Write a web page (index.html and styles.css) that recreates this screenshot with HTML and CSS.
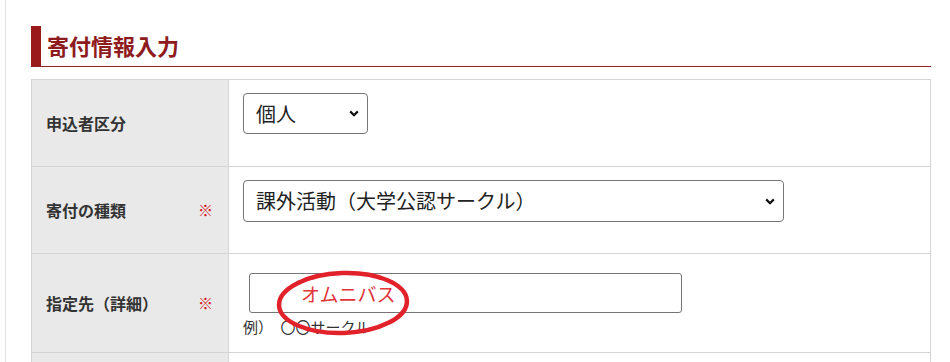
FILE: index.html
```html
<!DOCTYPE html>
<html lang="ja">
<head>
  <meta charset="UTF-8">
  <meta name="viewport" content="width=device-width, initial-scale=1">
  <title>寄付情報入力</title>
  <link rel="stylesheet" href="styles.css">
</head>
<body>
  <div class="page">
    <h2 class="section-title">寄付情報入力</h2>

    <table class="form-table">
      <tr class="row-type">
        <th><div class="label">申込者区分</div></th>
        <td>
          <select class="select-small">
            <option>個人</option>
            <option>法人</option>
          </select>
        </td>
      </tr>
      <tr class="row-kind">
        <th><div class="label">寄付の種類<span class="req">※</span></div></th>
        <td>
          <select class="select-wide">
            <option>課外活動（大学公認サークル）</option>
          </select>
        </td>
      </tr>
      <tr class="row-target">
        <th><div class="label">指定先（詳細）<span class="req">※</span></div></th>
        <td>
          <div class="field">
            <input type="text" class="text-input" value="オムニバス">
            <p class="hint">例）　〇〇サークル</p>
            <svg class="mark" width="140" height="72" viewBox="0 0 140 72">
              <ellipse cx="69" cy="35" rx="64" ry="30" fill="none" stroke="#e1222b" stroke-width="4.5" transform="rotate(-2 69 35)"/>
            </svg>
          </div>
        </td>
      </tr>
      <tr class="row-amount">
        <th></th>
        <td></td>
      </tr>
    </table>
  </div>
</body>
</html>
```

FILE: styles.css
```css
body {
  margin: 0;
  font-family: "Noto Sans CJK JP", "Noto Sans", sans-serif;
  color: #333;
  background: #fff;
}
.page {
  margin-left: 5px;
  padding: 26px 0 0 25px;
  border-left: 1px solid #e2e2e2;
  min-height: 400px;
  width: 900px;
}
.section-title {
  margin: 0;
  height: 40px;
  line-height: 38px;
  padding-left: 6px;
  border-left: 10px solid #9a1a1c;
  border-bottom: 1px solid #8c2426;
  color: #8e1b1d;
  font-size: 22px;
  font-weight: bold;
}
.form-table {
  margin-top: 12px;
  width: 900px;
  border-collapse: collapse;
  border: 1px solid #cfcfcf;
}
.form-table th,
.form-table td {
  border: 1px solid #d4d4d4;
  text-align: left;
}
.form-table th {
  width: 168px;
  background: #e9e9e9;
  padding: 0 14px;
  vertical-align: middle;
}
.form-table td {
  vertical-align: top;
  padding: 13px 14px 0;
  background: #fff;
}
.label {
  display: flex;
  justify-content: space-between;
  align-items: center;
  font-size: 16px;
  font-weight: bold;
  color: #333;
  line-height: 20px;
}
.req {
  color: #d4141c;
  font-weight: normal;
  font-size: 15px;
  padding-right: 1px;
}
.row-type td,
.row-type th {
  height: 73px;
}
.row-kind td,
.row-kind th {
  height: 73px;
}
.row-target td,
.row-target th {
  height: 85px;
}
.row-amount td,
.row-amount th {
  height: 60px;
}
select {
  appearance: none;
  font-family: inherit;
  font-size: 20px;
  color: #222;
  background: #fff url("data:image/svg+xml,%3Csvg xmlns='http://www.w3.org/2000/svg' width='10' height='7' viewBox='0 0 10 7'%3E%3Cpath d='M1.2 1.4 5 5.2 8.8 1.4' fill='none' stroke='%23111' stroke-width='2.2'/%3E%3C/svg%3E") no-repeat right 8px center;
  border: 1px solid #767676;
  border-radius: 4px;
  padding: 0 24px 0 12px;
  line-height: 1;
}
.select-small {
  width: 125px;
  height: 41px;
}
.select-wide {
  width: 541px;
  height: 42px;
}
.field {
  position: relative;
}
.text-input {
  display: block;
  box-sizing: border-box;
  width: 433px;
  height: 40px;
  margin: 6px 0 0 6px;
  padding: 0 0 0 51px;
  border: 1px solid #767676;
  border-radius: 3px;
  font-family: inherit;
  font-size: 19px;
  color: #e0353a;
}
.hint {
  margin: 5px 0 0;
  font-size: 15px;
  line-height: 18px;
  color: #333;
}
.mark {
  position: absolute;
  left: 31px;
  top: -5px;
}
```
